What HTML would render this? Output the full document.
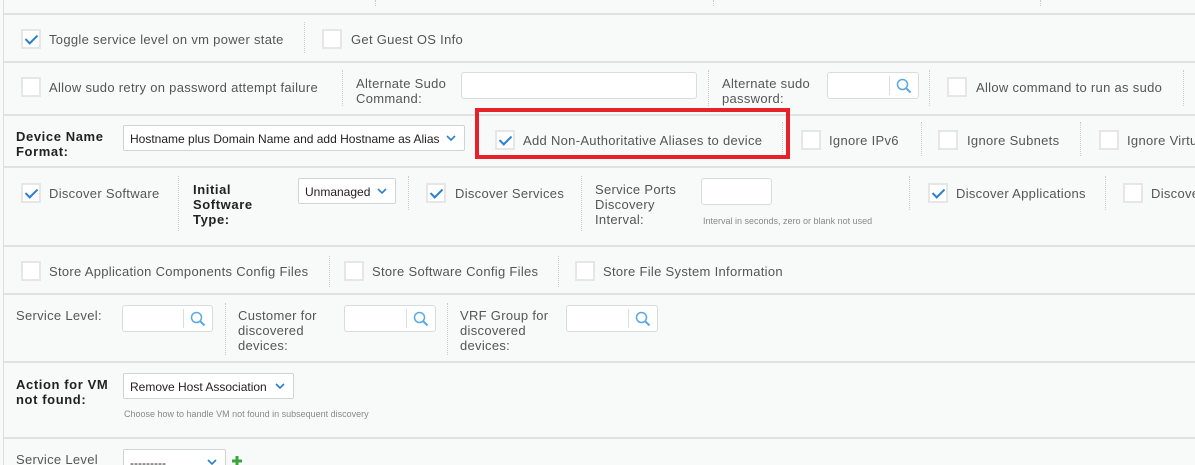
<!DOCTYPE html>
<html><head><meta charset="utf-8"><style>
*{margin:0;padding:0;box-sizing:border-box}
html,body{width:1195px;height:465px;overflow:hidden}
body{background:#f8fafa;font-family:"Liberation Sans",Arial,sans-serif;font-size:13px;letter-spacing:.3px;color:#555;position:relative}
.a{position:absolute;white-space:nowrap}
.hl{position:absolute;left:3px;right:0;height:2px;background:#e0e2e2}
.vs{position:absolute;width:0;border-left:1px dotted #c8cccc}
.cb{position:absolute;width:20px;height:20px;border:2px solid #e6e6e6;background:#fff}
.cb.c::after{content:"";position:absolute;left:5px;top:1px;width:5px;height:10px;border:solid #2b7fd3;border-width:0 2px 2px 0;transform:rotate(45deg)}
.b{font-weight:bold;color:#222;line-height:15px;letter-spacing:.6px}
.lb{line-height:15px}
.inp{position:absolute;background:#fff;border:1px solid #d8dcdc;border-radius:3px}
.srch{position:absolute;background:#fff;border:1px solid #d8dcdc;border-radius:3px}
.srch::before{content:"";position:absolute;right:28px;top:3px;bottom:3px;border-left:1px solid #ddd}
.srch svg{position:absolute;right:6px;top:5px}
.sel{position:absolute;background:#fff;border:1px solid #d0d4d4;border-radius:2px;color:#222;font-size:12px;letter-spacing:0;padding:6px 6px;white-space:nowrap}
.sel svg{position:absolute;right:8px;top:9px}
.hint{font-size:9px;color:#888;letter-spacing:0}
</style></head><body>
<div style="position:absolute;left:3px;top:0;bottom:0;border-left:1px solid #ddd"></div>
<div class="hl" style="top:13px"></div>
<div class="vs" style="left:375px;top:0;height:6px"></div>
<div class="vs" style="left:713px;top:0;height:6px"></div>
<div class="vs" style="left:1040px;top:0;height:6px"></div>

<div class="cb c" style="left:21px;top:29px"></div><div class="a" style="left:49px;top:32px">Toggle service level on vm power state</div>
<div class="vs" style="left:304px;top:22px;height:31px"></div>
<div class="cb" style="left:322px;top:29px"></div><div class="a" style="left:351px;top:32px">Get Guest OS Info</div>
<div class="hl" style="top:61px"></div>

<div class="cb" style="left:21px;top:77px"></div><div class="a" style="left:49px;top:80px">Allow sudo retry on password attempt failure</div>
<div class="vs" style="left:342px;top:70px;height:36px"></div>
<div class="a lb" style="left:356px;top:76px">Alternate Sudo<br>Command:</div>
<div class="inp" style="left:461px;top:72px;width:236px;height:27px"></div>
<div class="vs" style="left:708px;top:70px;height:36px"></div>
<div class="a lb" style="left:722px;top:76px">Alternate sudo<br>password:</div>
<div class="srch" style="left:827px;top:72px;width:92px;height:27px"><svg width="16" height="16" viewBox="0 0 16 16"><circle cx="6.5" cy="6.5" r="5" fill="none" stroke="#5aa9e6" stroke-width="1.5"/><path d="M10 10l4.5 4.5" stroke="#5aa9e6" stroke-width="2"/></svg></div>
<div class="vs" style="left:929px;top:70px;height:36px"></div>
<div class="cb" style="left:947px;top:77px"></div><div class="a" style="left:976px;top:80px">Allow command to run as sudo</div>
<div class="vs" style="left:1183px;top:70px;height:36px"></div>
<div class="hl" style="top:114px"></div>

<div class="a b" style="left:16px;top:129px">Device Name<br>Format:</div>
<div class="sel" style="left:123px;top:125px;width:342px;height:26px">Hostname plus Domain Name and add Hostname as Alias<svg width="10" height="7" viewBox="0 0 10 7"><path d="M1 1l4 4 4-4" fill="none" stroke="#2b7fd3" stroke-width="1.6"/></svg></div>
<div class="cb c" style="left:495px;top:130px"></div><div class="a" style="left:523px;top:133px">Add Non-Authoritative Aliases to device</div>
<div class="vs" style="left:782px;top:122px;height:34px"></div>
<div class="cb" style="left:801px;top:130px"></div><div class="a" style="left:829px;top:133px">Ignore IPv6</div>
<div class="vs" style="left:921px;top:122px;height:34px"></div>
<div class="cb" style="left:938px;top:130px"></div><div class="a" style="left:967px;top:133px">Ignore Subnets</div>
<div class="vs" style="left:1080px;top:122px;height:34px"></div>
<div class="cb" style="left:1099px;top:130px"></div><div class="a" style="left:1127px;top:133px">Ignore Virtual</div>
<div style="position:absolute;left:475px;top:108px;width:315px;height:51px;border:4px solid #e8202a"></div>
<div class="hl" style="top:166px"></div>

<div class="cb c" style="left:21px;top:183px"></div><div class="a" style="left:49px;top:186px">Discover Software</div>
<div class="vs" style="left:178px;top:176px;height:55px"></div>
<div class="a b" style="left:193px;top:182px">Initial<br>Software<br>Type:</div>
<div class="sel" style="left:298px;top:178px;width:98px;height:26px">Unmanaged<svg width="10" height="7" viewBox="0 0 10 7"><path d="M1 1l4 4 4-4" fill="none" stroke="#2b7fd3" stroke-width="1.6"/></svg></div>
<div class="vs" style="left:408px;top:176px;height:34px"></div>
<div class="cb c" style="left:426px;top:183px"></div><div class="a" style="left:455px;top:186px">Discover Services</div>
<div class="vs" style="left:581px;top:176px;height:55px"></div>
<div class="a lb" style="left:595px;top:182px">Service Ports<br>Discovery<br>Interval:</div>
<div class="inp" style="left:701px;top:178px;width:71px;height:27px"></div>
<div class="a hint" style="left:703px;top:216px">Interval in seconds, zero or blank not used</div>
<div class="vs" style="left:909px;top:176px;height:34px"></div>
<div class="cb c" style="left:928px;top:183px"></div><div class="a" style="left:956px;top:186px">Discover Applications</div>
<div class="vs" style="left:1105px;top:176px;height:34px"></div>
<div class="cb" style="left:1123px;top:183px"></div><div class="a" style="left:1151px;top:186px">Discover</div>
<div class="hl" style="top:245px"></div>

<div class="cb" style="left:21px;top:261px"></div><div class="a" style="left:49px;top:264px">Store Application Components Config Files</div>
<div class="vs" style="left:329px;top:256px;height:31px"></div>
<div class="cb" style="left:344px;top:261px"></div><div class="a" style="left:372px;top:264px">Store Software Config Files</div>
<div class="vs" style="left:558px;top:256px;height:31px"></div>
<div class="cb" style="left:575px;top:261px"></div><div class="a" style="left:603px;top:264px">Store File System Information</div>
<div class="hl" style="top:293px"></div>

<div class="a lb" style="left:16px;top:308px">Service Level:</div>
<div class="srch" style="left:122px;top:305px;width:91px;height:27px"><svg width="16" height="16" viewBox="0 0 16 16"><circle cx="6.5" cy="6.5" r="5" fill="none" stroke="#5aa9e6" stroke-width="1.5"/><path d="M10 10l4.5 4.5" stroke="#5aa9e6" stroke-width="2"/></svg></div>
<div class="vs" style="left:225px;top:303px;height:52px"></div>
<div class="a lb" style="left:238px;top:308px">Customer for<br>discovered<br>devices:</div>
<div class="srch" style="left:344px;top:305px;width:92px;height:27px"><svg width="16" height="16" viewBox="0 0 16 16"><circle cx="6.5" cy="6.5" r="5" fill="none" stroke="#5aa9e6" stroke-width="1.5"/><path d="M10 10l4.5 4.5" stroke="#5aa9e6" stroke-width="2"/></svg></div>
<div class="vs" style="left:447px;top:303px;height:52px"></div>
<div class="a lb" style="left:460px;top:308px">VRF Group for<br>discovered<br>devices:</div>
<div class="srch" style="left:566px;top:305px;width:92px;height:27px"><svg width="16" height="16" viewBox="0 0 16 16"><circle cx="6.5" cy="6.5" r="5" fill="none" stroke="#5aa9e6" stroke-width="1.5"/><path d="M10 10l4.5 4.5" stroke="#5aa9e6" stroke-width="2"/></svg></div>
<div class="hl" style="top:361px"></div>

<div class="a b" style="left:16px;top:377px">Action for VM<br>not found:</div>
<div class="sel" style="left:123px;top:373px;width:171px;height:26px">Remove Host Association<svg width="10" height="7" viewBox="0 0 10 7"><path d="M1 1l4 4 4-4" fill="none" stroke="#2b7fd3" stroke-width="1.6"/></svg></div>
<div class="a hint" style="left:124px;top:409px">Choose how to handle VM not found in subsequent discovery</div>
<div class="hl" style="top:437px"></div>

<div class="a" style="left:16px;top:452px">Service Level</div>
<div class="sel" style="left:123px;top:449px;width:103px;height:26px">---------<svg width="10" height="7" viewBox="0 0 10 7"><path d="M1 1l4 4 4-4" fill="none" stroke="#2b7fd3" stroke-width="1.6"/></svg></div>
<svg class="a" style="left:232px;top:456px" width="10" height="10" viewBox="0 0 10 10"><path d="M3.5 0h3v3.5h3.5v3h-3.5v3.5h-3v-3.5h-3.5v-3h3.5z" fill="#3aa53a"/></svg>
</body></html>
